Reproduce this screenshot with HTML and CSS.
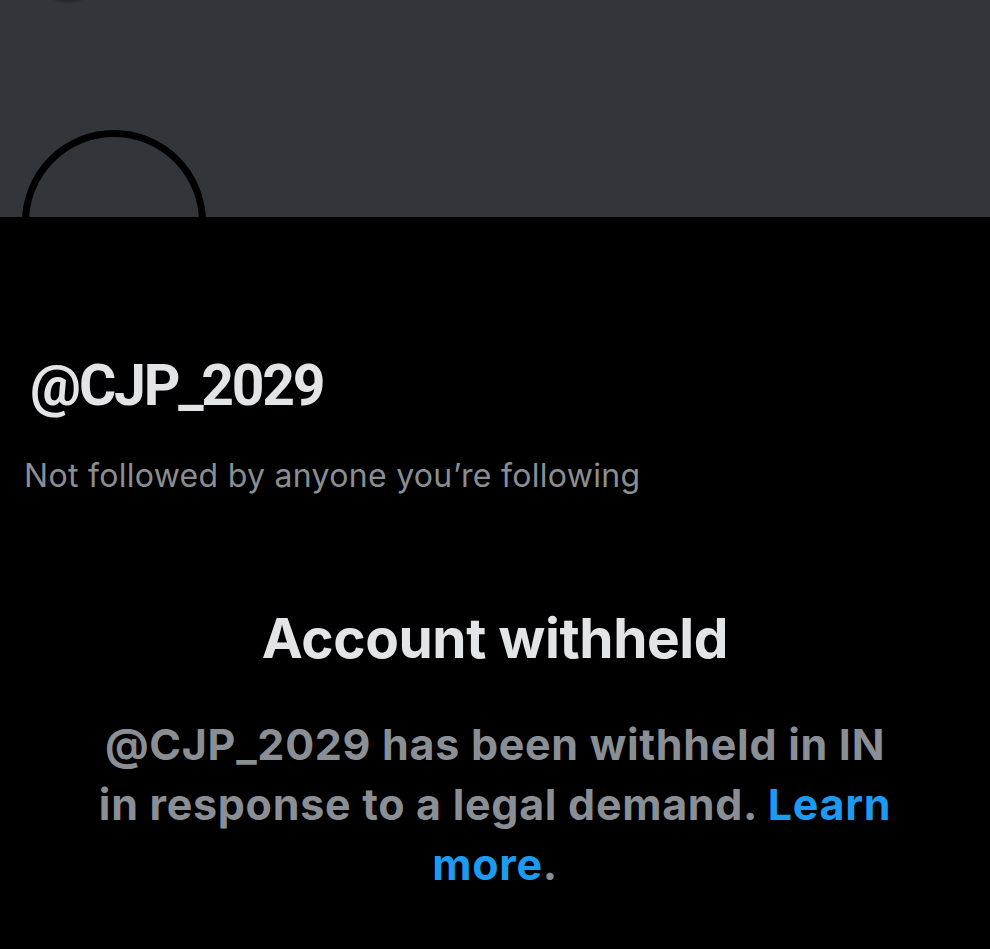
FILE: index.html
```html
<!DOCTYPE html>
<html lang="en">
<head>
<meta charset="utf-8">
<title>@CJP_2029</title>
<link rel="stylesheet" href="styles.css">
</head>
<body>
<div class="page">
  <header class="banner">
    <span class="shadow"></span>
  </header>
  <div class="avatar"></div>
  <section class="profile">
    <h1 class="handle">@CJP_2029</h1>
    <p class="followers">Not followed by anyone you’re following</p>
  </section>
  <section class="withheld">
    <h2 class="withheld-title">Account withheld</h2>
    <p class="withheld-text">@CJP_2029 has been withheld in IN in response to a legal demand. <a class="link" href="#">Learn more</a>.</p>
  </section>
</div>
</body>
</html>
```

FILE: styles.css
```css
* { box-sizing: border-box; }
html, body {
  margin: 0;
  padding: 0;
  background: #000;
}
body {
  font-family: Inter, Roboto, "Noto Sans", sans-serif;
  color: #e7e9ea;
}
.page {
  width: 990px;
  min-height: 949px;
  overflow: hidden;
}
.banner {
  position: relative;
  height: 217px;
  background: #323539;
}
.shadow {
  position: absolute;
  left: 44px;
  top: -30px;
  width: 48px;
  height: 34px;
  border-radius: 50%;
  background: radial-gradient(ellipse at center, rgba(20,22,24,0.9) 0%, rgba(20,22,24,0.6) 50%, rgba(50,53,57,0) 75%);
}
.avatar {
  position: relative;
  z-index: 1;
  width: 184px;
  height: 184px;
  margin: -87px 0 0 22px;
  border: 7px solid #000;
  border-radius: 50%;
}
.profile {
  display: flex;
  flex-direction: column;
}
.handle {
  margin: 40px 0 0 30px;
  font-family: Roboto, Inter, sans-serif;
  font-size: 57px;
  font-weight: 700;
  line-height: 64px;
  letter-spacing: -2.2px;
  color: #e3e4e5;
}
.followers {
  margin: 38px 0 0 24px;
  font-size: 32px;
  line-height: 40px;
  font-weight: 400;
  color: #8a8e93;
  letter-spacing: 0.3px;
}
.withheld {
  display: flex;
  flex-direction: column;
  align-items: center;
  text-align: center;
}
.withheld-title {
  margin: 110px 0 0;
  font-size: 55px;
  line-height: 64px;
  font-weight: 700;
  letter-spacing: -0.4px;
  color: #e3e4e5;
}
.withheld-text {
  width: 814px;
  margin: 44px 0 0;
  font-size: 43px;
  line-height: 60px;
  font-weight: 700;
  letter-spacing: 0.7px;
  color: #8a8f95;
}
.link {
  color: #1d9bf0;
  text-decoration: none;
}
```
